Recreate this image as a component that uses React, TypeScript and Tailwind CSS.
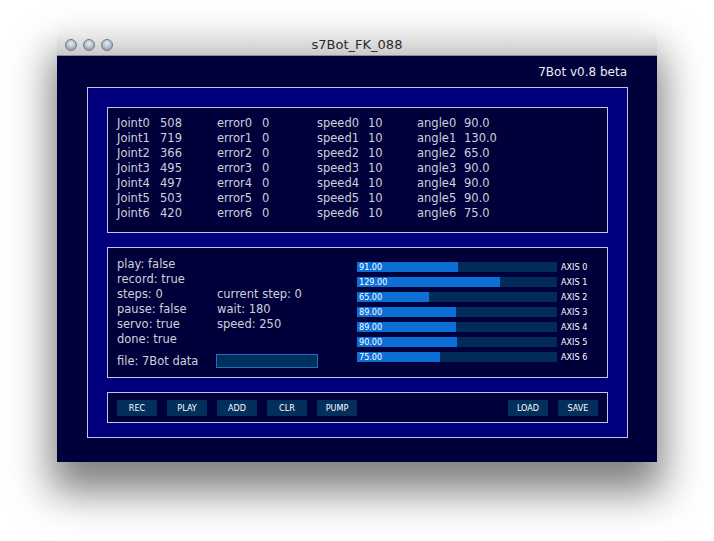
const joints = [508, 719, 366, 495, 497, 503, 420];
const angles = ["90.0", "130.0", "65.0", "90.0", "90.0", "90.0", "75.0"];
const axes = [91, 129, 65, 89, 89, 90, 75];
const axesText = ["91.00", "129.00", "65.00", "89.00", "89.00", "90.00", "75.00"];

const panelFont = { fontFamily: "'DejaVu Sans', 'Liberation Sans', sans-serif" };
const pixFont = { fontFamily: "'DejaVu Sans Condensed', 'Liberation Sans', sans-serif" };

function Btn({ label }: { label: string }) {
  return (
    <div
      className="w-[40px] h-[16px] bg-[#022f5c] text-white text-[9px] leading-[16px] text-center"
      style={pixFont}
    >
      {label}
    </div>
  );
}

function Light() {
  return (
    <div className="w-[12px] h-[12px] rounded-full border border-[#6f7a86] bg-[radial-gradient(circle_at_50%_35%,#e6eef6_0%,#aab8c6_55%,#7d8b99_100%)]" />
  );
}

export default function App() {
  return (
    <div className="w-[714px] h-[541px] bg-white pt-[33px] pl-[57px]">
      <div className="w-[600px] rounded-t-[5px] shadow-[0_24px_40px_6px_rgba(0,0,0,0.5)]">
        <div className="h-[23px] rounded-t-[5px] bg-gradient-to-b from-[#ececec] to-[#cacaca] border-b border-[#8c8c8c] grid grid-cols-[1fr_auto_1fr] items-center">
          <div className="flex gap-[6px] pl-[8px] pt-[1px]">
            <Light />
            <Light />
            <Light />
          </div>
          <div
            className="text-[13px] text-[#2a2a2a] leading-[15px]"
            style={{ fontFamily: "'DejaVu Sans', sans-serif" }}
          >
            s7Bot_FK_088
          </div>
          <div />
        </div>
        <div className="h-[406px] bg-[#00003a]">
          <div
            className="h-[31px] pt-[9px] pr-[30px] text-right text-[12px] leading-[15px] text-[#ececf2]"
            style={panelFont}
          >
            7Bot v0.8 beta
          </div>
          <div className="ml-[30px] w-[541px] h-[351px] border border-[#c4c4ec] bg-[#00007e] pt-[19px] pl-[19px] flex flex-col gap-[14px]">
            {/* Panel 1 */}
            <div
              className="w-[501px] h-[126px] border border-[#c4c4ec] bg-[#00003a] pt-[8px] pl-[9px] text-[11.5px] leading-[15px] text-[#d0d0da]"
              style={panelFont}
            >
              {joints.map((j, i) => (
                <div key={i} className="flex">
                  <div className="w-[100px] flex">
                    <span className="w-[43px]">Joint{i}</span>
                    <span>{j}</span>
                  </div>
                  <div className="w-[100px] flex">
                    <span className="w-[45px]">error{i}</span>
                    <span>0</span>
                  </div>
                  <div className="w-[100px] flex">
                    <span className="w-[51px]">speed{i}</span>
                    <span>10</span>
                  </div>
                  <div className="w-[100px] flex">
                    <span className="w-[47px]">angle{i}</span>
                    <span>{angles[i]}</span>
                  </div>
                </div>
              ))}
            </div>
            {/* Panel 2 */}
            <div className="w-[501px] h-[131px] border border-[#c4c4ec] bg-[#00003a] flex">
              <div
                className="w-[249px] pt-[9px] pl-[9px] text-[11.5px] leading-[15px] text-[#d0d0da]"
                style={panelFont}
              >
                <div className="flex"><span className="w-[100px]">play: false</span></div>
                <div className="flex"><span className="w-[100px]">record: true</span></div>
                <div className="flex">
                  <span className="w-[100px]">steps: 0</span>
                  <span>current step: 0</span>
                </div>
                <div className="flex">
                  <span className="w-[100px]">pause: false</span>
                  <span>wait: 180</span>
                </div>
                <div className="flex">
                  <span className="w-[100px]">servo: true</span>
                  <span>speed: 250</span>
                </div>
                <div className="flex"><span className="w-[100px]">done: true</span></div>
                <div className="flex items-center h-[14px] mt-[7px]">
                  <span className="w-[99px]">file: 7Bot data</span>
                  <div className="w-[102px] h-[14px] border border-[#1f6fca] bg-[#00305c]" />
                </div>
              </div>
              <div className="pt-[14px] flex flex-col gap-[5px]">
                {axes.map((v, i) => (
                  <div key={i} className="flex items-center h-[10px]">
                    <div className="relative w-[200px] h-[10px] bg-[#022a5a]">
                      <div
                        className="absolute left-0 top-0 h-[10px] bg-[#0b6fd8]"
                        style={{ width: `${(v / 180) * 200}px` }}
                      />
                      <span
                        className="relative pl-[2px] text-white text-[9px] leading-[10px] block"
                        style={pixFont}
                      >
                        {axesText[i]}
                      </span>
                    </div>
                    <span
                      className="ml-[4px] text-white text-[9px] leading-[10px]"
                      style={pixFont}
                    >
                      AXIS {i}
                    </span>
                  </div>
                ))}
              </div>
            </div>
            {/* Panel 3 */}
            <div className="w-[501px] h-[31px] border border-[#c4c4ec] bg-[#00003a] pt-[7px] px-[9px] flex">
              <div className="flex gap-[10px]">
                <Btn label="REC" />
                <Btn label="PLAY" />
                <Btn label="ADD" />
                <Btn label="CLR" />
                <Btn label="PUMP" />
              </div>
              <div className="flex-1" />
              <div className="flex gap-[10px]">
                <Btn label="LOAD" />
                <Btn label="SAVE" />
              </div>
            </div>
          </div>
        </div>
      </div>
    </div>
  );
}
